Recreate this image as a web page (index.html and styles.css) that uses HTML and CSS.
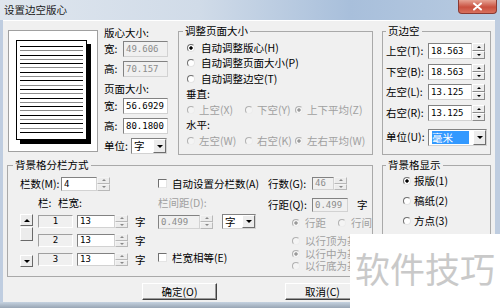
FILE: index.html
```html
<!doctype html>
<html lang="zh-CN">
  <head>
    <meta charset="UTF-8" />
    <meta name="viewport" content="width=device-width, initial-scale=1.0" />
    <title>设置边空版心</title>
    <link rel="stylesheet" href="styles.css">
  </head>
  <body>
    <div class="window">
      <div class="titlebar">
        <span class="title">设置边空版心</span>
        <span class="close">
          <svg width="11" height="9" viewBox="0 0 11 9"><path d="M2 1.5 L9 7.5 M9 1.5 L2 7.5" stroke="#fff" stroke-width="2" stroke-linecap="round" /></svg>
        </span>
      </div>

      <div class="client">
        <div class="top-row">
          <div class="preview">
            <div class="page"><div class="page-lines"></div></div>
          </div>

          <div class="sizes">
            <div class="caption">版心大小:</div>
            <div class="size-row"><span class="lbl">宽:</span><span class="edit off">49.606</span></div>
            <div class="size-row"><span class="lbl">高:</span><span class="edit off">70.157</span></div>
            <div class="caption tall">页面大小:</div>
            <div class="size-row"><span class="lbl">宽:</span><span class="edit">56.6929</span></div>
            <div class="size-row"><span class="lbl">高:</span><span class="edit">80.1800</span></div>
            <div class="size-row">
              <span class="lbl unit">单位:</span>
              <span class="combo unit-combo"><span class="combo-text">字</span><span class="drop"></span></span>
            </div>
          </div>

          <fieldset class="group adjust">
            <legend>调整页面大小</legend>
            <div class="adjust-body">
              <div class="opt-row"><span class="radio on"></span>自动调整版心(H)</div>
              <div class="opt-row"><span class="radio"></span>自动调整页面大小(P)</div>
              <div class="opt-row"><span class="radio"></span>自动调整边空(T)</div>
              <div class="opt-row">垂直:</div>
              <div class="opt-row dim">
                <span class="opt w1"><span class="radio"></span>上空(X)</span>
                <span class="opt w2"><span class="radio"></span>下空(Y)</span>
                <span class="opt"><span class="radio on"></span>上下平均(Z)</span>
              </div>
              <div class="opt-row">水平:</div>
              <div class="opt-row dim">
                <span class="opt w1"><span class="radio"></span>左空(W)</span>
                <span class="opt w2"><span class="radio"></span>右空(K)</span>
                <span class="opt"><span class="radio on"></span>左右平均(W)</span>
              </div>
            </div>
          </fieldset>

          <fieldset class="group margins">
            <legend>页边空</legend>
            <div class="margins-body">
              <div class="margin-row">
                <span class="lbl">上空(T):</span>
                <span class="edit">18.563</span>
                <span class="spin"><span class="up"></span><span class="down"></span></span>
              </div>
              <div class="margin-row">
                <span class="lbl">下空(B):</span>
                <span class="edit">18.563</span>
                <span class="spin"><span class="up"></span><span class="down"></span></span>
              </div>
              <div class="margin-row">
                <span class="lbl">左空(L):</span>
                <span class="edit">13.125</span>
                <span class="spin"><span class="up"></span><span class="down"></span></span>
              </div>
              <div class="margin-row">
                <span class="lbl">右空(R):</span>
                <span class="edit">13.125</span>
                <span class="spin"><span class="up"></span><span class="down"></span></span>
              </div>
              <div class="margin-row unit-row">
                <span class="lbl">单位(U):</span>
                <span class="combo mm-combo"><span class="combo-text"><span class="selected">毫米</span></span><span class="drop"></span></span>
              </div>
            </div>
          </fieldset>
        </div>

        <div class="bottom-row">
          <fieldset class="group columns">
            <legend>背景格分栏方式</legend>
            <div class="columns-body">
              <div class="col-left">
                <div class="line">
                  <span class="lbl count-lbl">栏数(M):</span>
                  <span class="edit count-edit">4</span>
                  <span class="spin flat"><span class="up"></span><span class="down"></span></span>
                </div>
                <div class="head">
                  <span class="head-col">栏:</span>
                  <span>栏宽:</span>
                </div>
                <div class="table">
                  <div class="scroll">
                    <span class="arrow-btn"><span class="tri up"></span></span>
                    <span class="thumb"></span>
                    <span class="arrow-btn"><span class="tri down"></span></span>
                  </div>
                  <div class="rows">
                    <div class="col-row">
                      <span class="index">1</span>
                      <span class="edit width-edit">13</span>
                      <span class="spin flat"><span class="up"></span><span class="down"></span></span>
                      <span class="unit-char">字</span>
                    </div>
                    <div class="col-row">
                      <span class="index">2</span>
                      <span class="edit width-edit">13</span>
                      <span class="spin flat"><span class="up"></span><span class="down"></span></span>
                      <span class="unit-char">字</span>
                    </div>
                    <div class="col-row">
                      <span class="index">3</span>
                      <span class="edit width-edit">13</span>
                      <span class="spin flat"><span class="up"></span><span class="down"></span></span>
                      <span class="unit-char">字</span>
                    </div>
                  </div>
                </div>
              </div>

              <div class="col-mid">
                <div class="line"><span class="check"></span>自动设置分栏数(A)</div>
                <div class="head dim">栏间距(D):</div>
                <div class="gap-row">
                  <span class="edit off gap-edit">0.499</span>
                  <span class="spin flat"><span class="up"></span><span class="down"></span></span>
                  <span class="combo gap-combo"><span class="combo-text">字</span><span class="drop"></span></span>
                </div>
                <div class="line equal"><span class="check"></span>栏宽相等(E)</div>
              </div>

              <div class="col-right">
                <div class="line">
                  <span class="lbl row-lbl">行数(G):</span>
                  <span class="edit off rows-edit">46</span>
                  <span class="spin flat"><span class="up"></span><span class="down"></span></span>
                </div>
                <div class="line spacing">
                  <span class="lbl row-lbl">行距(Q):</span>
                  <span class="edit off spacing-edit">0.499</span>
                  <span class="unit-char">字</span>
                </div>
                <div class="line dim pair">
                  <span class="opt w3"><span class="radio on"></span>行距</span>
                  <span class="opt"><span class="radio"></span>行间</span>
                </div>
                <div class="base dim">
                  <div class="base-row"><span class="radio"></span>以行顶为基</div>
                  <div class="base-row"><span class="radio on"></span>以行中为基</div>
                  <div class="base-row"><span class="radio"></span>以行底为基</div>
                </div>
              </div>
            </div>
          </fieldset>

          <fieldset class="group display">
            <legend>背景格显示</legend>
            <div class="display-body">
              <div class="show-row"><span class="radio on"></span>报版(1)</div>
              <div class="show-row"><span class="radio"></span>稿纸(2)</div>
              <div class="show-row"><span class="radio"></span>方点(3)</div>
            </div>
          </fieldset>
        </div>

        <div class="buttons">
          <button class="btn ok">确定(O)</button>
          <button class="btn cancel">取消(C)</button>
        </div>
      </div>

      <div class="frame-bottom"></div>

      <div class="watermark">软件技巧</div>
    </div>
  </body>
</html>
```

FILE: styles.css
```css
* {
  box-sizing: border-box;
}

body {
  margin: 0;
  font-family: "Noto Sans CJK SC", sans-serif;
  font-size: 10.5px;
  line-height: 12px;
  color: #000;
}

.window {
  position: relative;
  width: 500px;
  height: 308px;
  display: flex;
  flex-direction: column;
  background: #bfcde0;
  overflow: hidden;
}

/* title bar */

.titlebar {
  height: 20px;
  display: flex;
  justify-content: space-between;
  padding-left: 4px;
  background: linear-gradient(to right, #dfe6ee, #d0dbe8 40%, #a8bfdb 70%, #b8cbe1);
}

.title {
  line-height: 20px;
  color: #1b1b1b;
}

.close {
  width: 39px;
  height: 14px;
  margin-right: 3px;
  display: flex;
  align-items: center;
  justify-content: center;
  border: 1px solid #8a3a33;
  border-top: 0;
  border-radius: 0 0 4px 4px;
  background: linear-gradient(#e6a394, #c9503f 55%, #d8705e);
}

.client {
  margin-left: 3px;
  width: 492px;
  height: 282px;
  background: #f0f0f0;
  border-top: 1px solid #fff;
}

.frame-bottom {
  flex: 1;
  background: linear-gradient(#c5d2e0, #98a5b4);
}

/* shared controls */

.dim {
  color: #a0a0a0;
}

.edit {
  display: block;
  height: 16px;
  padding-left: 2px;
  border: 1px solid;
  border-color: #828282 #d2d2d2 #d2d2d2 #828282;
  background: #fff;
  font: 9px/14px "DejaVu Sans Mono", monospace;
  white-space: nowrap;
  overflow: hidden;
}

.edit.off {
  background: #f0f0f0;
  color: #8c8c8c;
}

.spin {
  display: flex;
  flex-direction: column;
  width: 13px;
  height: 16px;
}

.spin span {
  flex: 1;
  display: flex;
  align-items: center;
  justify-content: center;
  border: 1px solid;
  border-color: #fff #8a8a8a #8a8a8a #fff;
  background: #ececec;
}

.spin span::after {
  content: "";
  border-left: 2px solid transparent;
  border-right: 2px solid transparent;
}

.spin .up::after {
  border-bottom: 2px solid #000;
}

.spin .down::after {
  border-top: 2px solid #000;
}

.spin.flat span {
  border-color: #f4f4f4 #b8b8b8 #b8b8b8 #f4f4f4;
}

.spin.flat .up::after {
  border-bottom-color: #888;
}

.spin.flat .down::after {
  border-top-color: #888;
}

.combo {
  display: flex;
  height: 16px;
  border: 1px solid;
  border-color: #828282 #d2d2d2 #d2d2d2 #828282;
  background: #fff;
}

.combo-text {
  flex: 1;
  padding-left: 2px;
  line-height: 14px;
}

.drop {
  width: 13px;
  display: flex;
  align-items: center;
  justify-content: center;
  border: 1px solid;
  border-color: #fff #6e6e6e #6e6e6e #fff;
  background: #ececec;
}

.drop::after {
  content: "";
  border-left: 3px solid transparent;
  border-right: 3px solid transparent;
  border-top: 3px solid #000;
}

.radio {
  flex: none;
  width: 8px;
  height: 8px;
  border-radius: 50%;
  border: 1px solid;
  border-color: #707070 #e4e4e4 #e4e4e4 #707070;
  background: #fff;
}

.radio.on {
  background: radial-gradient(circle, #000 0 1.4px, #fff 1.9px);
}

.dim .radio {
  border-color: #b0b0b0 #ececec #ececec #b0b0b0;
  background: #f4f4f4;
}

.dim .radio.on {
  background: radial-gradient(circle, #9a9a9a 0 1.4px, #f4f4f4 1.9px);
}

.check {
  flex: none;
  width: 9px;
  height: 9px;
  margin-right: 5px;
  border: 1px solid;
  border-color: #707070 #e4e4e4 #e4e4e4 #707070;
  background: #fff;
}

.group {
  margin: 0;
  padding: 0;
  min-width: 0;
  border: 1px solid #a9a9a9;
}

.group legend {
  padding: 0 2px;
  height: 12px;
  line-height: 12px;
}

/* top part */

.top-row {
  display: flex;
  align-items: flex-start;
  height: 133px;
}

.preview {
  margin: 9px 0 0 5px;
  width: 90px;
  height: 122px;
  padding: 9px 0 0 7px;
  border: 1px solid #a0a0a0;
  background: #fff;
}

.page {
  width: 71px;
  height: 100px;
  padding: 5px 3px 0 3px;
  border: 1px solid #000;
  box-shadow: 4px 4px 0 #000;
  background: #fff;
}

.page-lines {
  height: 90px;
  background: repeating-linear-gradient(
    to bottom,
    #000 0 1px,
    transparent 1px 4.3px,
    #8c8c8c 4.3px 5.3px,
    transparent 5.3px 8.6px
  );
}

.sizes {
  margin: 5px 0 0 6px;
  width: 67px;
}

.caption {
  height: 13px;
  line-height: 13px;
}

.caption.tall {
  height: 17px;
  line-height: 19px;
}

.size-row {
  display: flex;
  align-items: center;
  height: 20px;
}

.size-row .lbl {
  width: 19px;
}

.size-row .lbl.unit {
  width: 27px;
}

.size-row .edit {
  width: 45px;
}

.unit-combo {
  width: 36px;
}

.adjust {
  margin: 4px 0 0 7px;
  width: 195px;
  height: 130px;
}

.adjust legend {
  margin-left: 4px;
}

.adjust-body {
  padding: 3px 0 0 7px;
}

.opt-row {
  display: flex;
  align-items: center;
  height: 15.5px;
  white-space: nowrap;
}

.opt {
  display: flex;
  align-items: center;
}

.opt-row .radio {
  margin: 0 6px 0 1px;
}

.opt-row.dim .radio {
  margin-right: 4px;
}

.opt.w1 {
  width: 58px;
}

.opt.w2 {
  width: 50px;
}

.margins {
  margin: 4px 0 0 9px;
  width: 109px;
  height: 130px;
}

.margins legend {
  margin-left: 3px;
}

.margins-body {
  display: flex;
  flex-direction: column;
  gap: 4.7px;
  padding: 6px 0 0 3px;
}

.margin-row {
  display: flex;
  align-items: center;
  height: 16px;
  white-space: nowrap;
}

.margin-row .lbl {
  width: 42px;
}

.margin-row .edit {
  width: 44px;
}

.unit-row {
  margin-top: 3px;
  height: 17px;
}

.mm-combo {
  width: 59px;
  height: 17px;
}

.mm-combo .combo-text {
  padding: 1px 0 0 3px;
}

.selected {
  display: block;
  width: 37px;
  height: 13px;
  line-height: 13px;
  background: #3399ff;
  color: #fff;
}

/* bottom part */

.bottom-row {
  display: flex;
  align-items: flex-start;
}

.columns {
  margin: 5px 0 0 4px;
  width: 366px;
  height: 118px;
}

.columns legend {
  margin-left: 5px;
}

.columns-body {
  display: flex;
  padding: 6px 0 0 12px;
  white-space: nowrap;
}

.line {
  display: flex;
  align-items: center;
  height: 13px;
}

.head {
  display: flex;
  margin-top: 7px;
  height: 12px;
  line-height: 12px;
}

.col-left {
  width: 138px;
}

.count-lbl {
  width: 41px;
}

.count-edit {
  width: 36px;
  height: 14px;
  line-height: 12px;
}

.col-left .line .spin {
  height: 14px;
}

.head-col {
  width: 38px;
  padding-left: 18px;
}

.table {
  display: flex;
  margin-top: 5px;
  height: 53px;
}

.scroll {
  display: flex;
  flex-direction: column;
  justify-content: space-between;
  width: 13px;
}

.arrow-btn,
.thumb {
  display: flex;
  align-items: center;
  justify-content: center;
  height: 12px;
  border: 1px solid;
  border-color: #fff #696969 #696969 #fff;
  background: #ececec;
}

.thumb {
  height: 14px;
  margin-bottom: auto;
}

.arrow-btn:first-child {
  margin-bottom: 1px;
}

.tri {
  border-left: 3px solid transparent;
  border-right: 3px solid transparent;
}

.tri.up {
  border-bottom: 3px solid #000;
}

.tri.down {
  border-top: 3px solid #000;
}

.rows {
  display: flex;
  flex-direction: column;
  gap: 6px;
  margin: 1px 0 0 5px;
}

.col-row {
  display: flex;
  align-items: center;
  height: 13px;
}

.index {
  width: 35px;
  height: 13px;
  margin-right: 4px;
  border: 1px solid;
  border-color: #a0a0a0 #fff #fff #a0a0a0;
  text-align: center;
  font: 9px/11px "DejaVu Sans Mono", monospace;
}

.width-edit {
  width: 38px;
  height: 13px;
  line-height: 11px;
}

.col-row .spin {
  height: 13px;
}

.unit-char {
  margin-left: 7px;
}

.col-mid {
  width: 110px;
}

.gap-row {
  display: flex;
  align-items: center;
  margin-top: 5px;
  height: 15px;
}

.gap-edit {
  width: 42px;
  height: 14px;
  line-height: 12px;
}

.gap-row .spin {
  height: 14px;
}

.gap-combo {
  margin-left: 9px;
  width: 34px;
  height: 15px;
}

.gap-combo .combo-text {
  line-height: 13px;
}

.equal {
  margin-top: 22px;
}

.row-lbl {
  width: 44px;
}

.rows-edit {
  width: 22px;
  height: 13px;
  line-height: 11px;
}

.col-right .line .spin {
  height: 13px;
}

.spacing {
  margin-top: 8px;
  height: 14px;
}

.spacing-edit {
  width: 36px;
  height: 14px;
  line-height: 12px;
}

.spacing .unit-char {
  margin-left: 9px;
}

.pair {
  margin-top: 4px;
  padding-left: 24px;
}

.pair .radio,
.base .radio {
  margin-right: 5px;
}

.opt.w3 {
  width: 46px;
}

.base {
  margin-top: 6px;
  padding-left: 24px;
}

.base-row {
  display: flex;
  align-items: center;
  height: 12.5px;
  line-height: 12px;
}

.display {
  margin: 5px 0 0 9px;
  width: 109px;
  height: 92px;
}

.display legend {
  margin-left: 3px;
}

.display-body {
  padding-left: 20px;
}

.show-row {
  display: flex;
  align-items: center;
  height: 20px;
}

.show-row .radio {
  margin-right: 3px;
}

/* buttons */

.buttons {
  display: flex;
  gap: 68px;
  margin: 6px 0 0 139px;
}

.btn {
  width: 75px;
  height: 17px;
  padding: 0;
  border: 1px solid;
  border-color: #fff #404040 #404040 #fff;
  box-shadow: inset -1px -1px 0 #9a9a9a;
  background: #f0f0f0;
  font: inherit;
  line-height: 14px;
}

/* watermark over the corner */

.watermark {
  position: absolute;
  left: 350px;
  top: 234px;
  width: 150px;
  height: 74px;
  padding: 0 0 6px 5px;
  display: flex;
  align-items: center;
  background: #fff;
  color: #c9c9c9;
  font-size: 35px;
  line-height: 40px;
  white-space: nowrap;
}
```
